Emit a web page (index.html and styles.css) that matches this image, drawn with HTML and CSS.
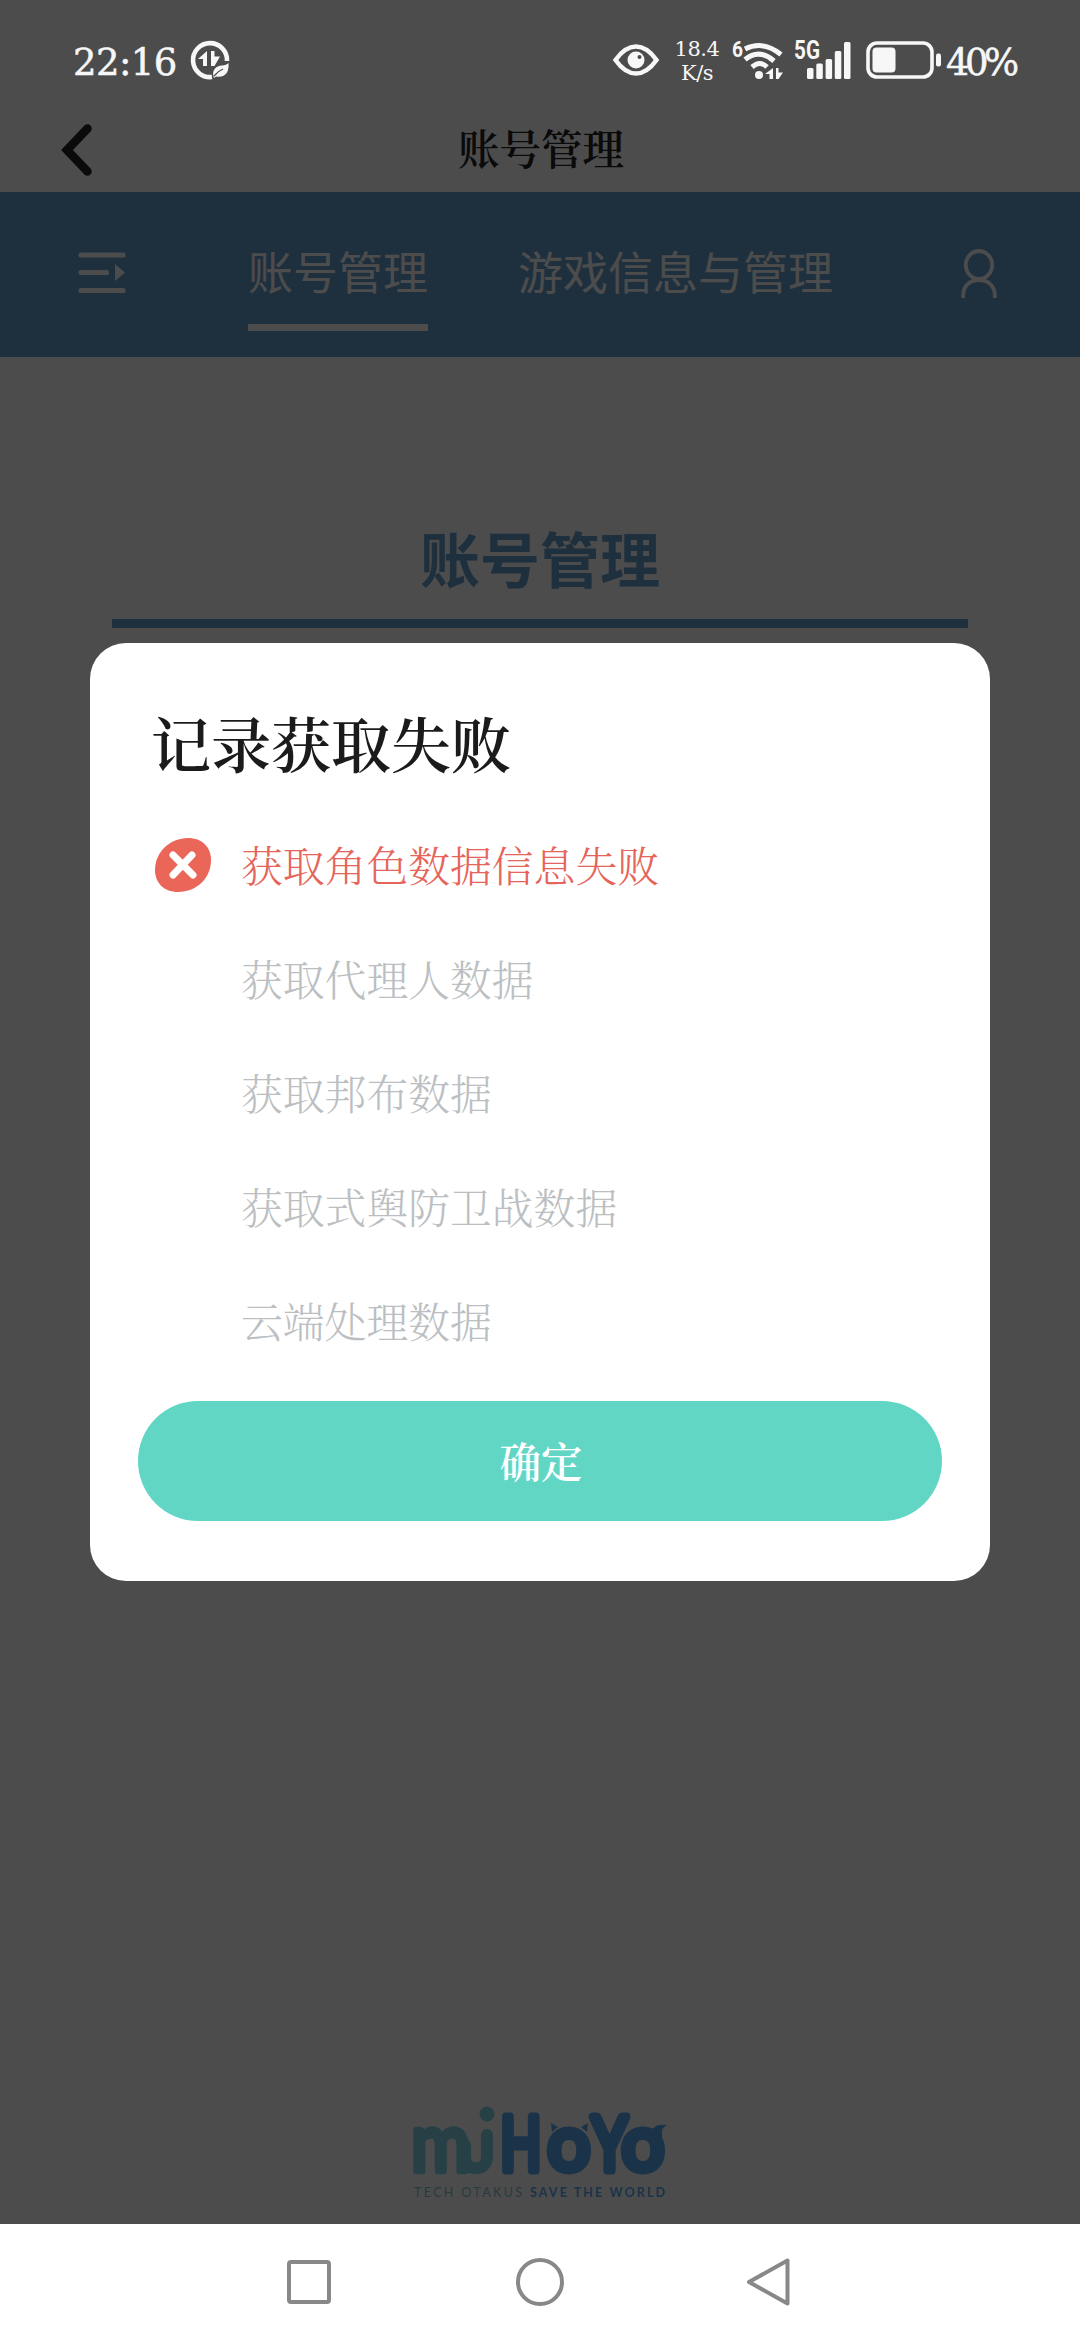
FILE: index.html
```html
<!DOCTYPE html>
<html lang="zh-CN">
<head>
<meta charset="utf-8">
<title>账号管理</title>
<link rel="stylesheet" href="styles.css">
</head>
<body>
<div class="screen">
  <header class="status">
    <span class="clock">22:16</span>
    <svg class="saver" width="40" height="40" viewBox="0 0 40 40">
      <path d="M37 21A17 17 0 1 0 22 37" fill="none" stroke="#f7f7f7" stroke-width="4.6"/>
      <path d="M17 11v15h-4v-7h-5zM21 11h3.500v5.500H30L24.500 26H21z" fill="#f7f7f7"/>
      <path d="M38.500 23c.8 9-3 15-12.500 13.500l-2 1.500c-3-8 2-12 8-12.500 3 0 5-1 6.500-2.500z" fill="#f7f7f7"/>
      <path d="M24 36q4-5 9-7" stroke="#4c4c4c" stroke-width="1.300" fill="none"/>
    </svg>
    <div class="indicators">
      <svg class="eye" width="46" height="32" viewBox="0 0 46 32">
        <path d="M2.500 16Q12 2.500 23 2.500T43.500 16Q34 29.500 23 29.500T2.500 16z" fill="none" stroke="#f7f7f7" stroke-width="4.500"/>
        <circle cx="23" cy="16" r="8.500" fill="#f7f7f7"/><circle cx="26.500" cy="13" r="2" fill="#4c4c4c"/>
      </svg>
      <div class="speed"><span>18.4</span><span>K/s</span></div>
      <svg class="wifi" width="52" height="42" viewBox="0 0 52 42">
        <text x="0" y="17.500" class="badge" font-size="22" textLength="11" lengthAdjust="spacingAndGlyphs">6</text>
        <g fill="none" stroke="#f7f7f7" stroke-width="5">
          <path d="M13 10Q31 1 49 15.500"/><path d="M13 20.500Q27 9 42 22"/><path d="M20 28Q28 21 35 28"/>
        </g>
        <circle cx="27" cy="36" r="4" fill="#f7f7f7"/>
        <path d="M41 29v11h-3.500v-5H33zM44 29h2.500v4.500H51L46.500 40H44z" fill="#f7f7f7"/>
      </svg>
      <svg class="signal" width="60" height="42" viewBox="0 0 60 42">
        <text x="0" y="20" class="badge" font-size="25" textLength="26" lengthAdjust="spacingAndGlyphs">5G</text>
        <g fill="#f7f7f7">
          <rect x="13" y="29" width="6.500" height="11" rx="1.500"/><rect x="22.300" y="24.500" width="6.500" height="15.500" rx="1.500"/><rect x="31.600" y="20" width="6.500" height="20" rx="1.500"/><rect x="40.800" y="12" width="6.500" height="28" rx="1.500"/><rect x="50" y="3" width="6.500" height="37" rx="1.500"/>
        </g>
      </svg>
      <svg class="battery" width="76" height="38" viewBox="0 0 76 38">
        <rect x="2" y="2" width="64" height="34" rx="9" fill="none" stroke="#f7f7f7" stroke-width="3.600"/>
        <rect x="6.500" y="6.500" width="23" height="25" rx="4" fill="#f7f7f7"/><rect x="70" y="12.500" width="5" height="13" rx="2" fill="#f7f7f7"/>
      </svg>
      <span class="percent">40%</span>
    </div>
  </header>

  <main class="page">
    <div class="titlebar">
      <svg class="back" width="34" height="56" viewBox="0 0 34 56"><path d="M27.500 6.500L7 28l20.500 21.500" fill="none" stroke="#222" stroke-width="8.500" stroke-linecap="round" stroke-linejoin="miter"/></svg>
      <span class="bar-title">账号管理</span>
    </div>
    <nav class="tabs">
      <svg class="menu" width="48" height="42" viewBox="0 0 48 42">
        <path d="M3 3h42M3 20.500h25.500M3 38.500h42" stroke="#fff" stroke-width="5.200" stroke-linecap="round"/><path d="M37 12l10 8.500L37 29z" fill="#fff"/>
      </svg>
      <span class="tab tab-active">账号管理</span>
      <span class="tab">游戏信息与管理</span>
      <svg class="user" width="36" height="50" viewBox="0 0 36 50"><g fill="none" stroke="#fff" stroke-width="3.800"><ellipse cx="18" cy="16" rx="13.200" ry="14"/><path d="M2.200 49v-3C2.200 26 33.800 26 33.800 46v3"/></g></svg>
    </nav>
    <h1 class="heading">账号管理</h1>
    <footer class="brand">
      <svg width="260" height="76" viewBox="20 12 260 76">
        <g class="logo-mi">
          <text transform="translate(21 80.500) scale(.88 1)" font-size="82">m</text>
          <path d="M75 55v12c0 15 22 15 22 0V45" fill="none" stroke-width="12"/>
          <circle cx="97" cy="24" r="7.500" stroke="none"/>
        </g>
        <g class="logo-hoyo">
          <text transform="translate(110.500 80) scale(.72 1)" font-size="74">H</text>
          <text transform="translate(157.500 80) scale(.98 1)" font-size="77">o</text>
          <text transform="translate(202 80) scale(.76 1)" font-size="74">Y</text>
          <text transform="translate(231.500 80) scale(.98 1)" font-size="77">o</text>
          <path d="M161 33l7 4-6 5zM198 33l-7 4 6 5zM253 41q8 1 13-5 4-2 11-1-6 3-5 9v13z" stroke="none"/>
        </g>
      </svg>
      <svg class="tagline" width="252" height="14" viewBox="0 0 252 14">
        <text x="0" y="12" fill="#84c5d2" font-size="12.500" textLength="108">TECH OTAKUS</text>
        <text x="116" y="12" fill="#5daaf3" font-size="12.500" font-weight="700" textLength="135">SAVE THE WORLD</text>
      </svg>
    </footer>
  </main>

  <div class="scrim">
    <section class="dialog">
      <h2 class="dialog-title">记录获取失败</h2>
      <ul class="steps">
        <li class="step step-failed">
          <svg class="fail" width="56" height="54" viewBox="0 0 56 54">
            <path d="M33 0C47 0 56 9 56 22 56 40 42 54 23 54 9 54 0 45 0 32 0 14 15 0 33 0z" fill="#ea6658"/>
            <path d="M18 17l20 20M37 17L18 37" stroke="#fff" stroke-width="7" stroke-linecap="round"/>
          </svg>
          <span>获取角色数据信息失败</span></li>
        <li class="step"><span>获取代理人数据</span></li>
        <li class="step"><span>获取邦布数据</span></li>
        <li class="step"><span>获取式舆防卫战数据</span></li>
        <li class="step"><span>云端处理数据</span></li>
      </ul>
      <button class="confirm">确定</button>
    </section>
  </div>

  <nav class="sysnav">
    <svg width="52" height="52" viewBox="0 0 52 52"><rect x="6" y="6" width="40" height="40" rx="2"/></svg>
    <svg width="52" height="52" viewBox="0 0 52 52"><circle cx="26" cy="26" r="22"/></svg>
    <svg width="52" height="52" viewBox="0 0 52 52"><path d="M42.500 4.500v43L4 26z"/></svg>
  </nav>
</div>
</body>
</html>
```
FILE: styles.css
```css
* { box-sizing: border-box; }
body { margin: 0; background: #fff; font-family: "Noto Serif CJK SC", "Noto Sans CJK SC", sans-serif; }
svg { display: block; flex: none; overflow: visible; }

.screen { position: relative; width: 1080px; height: 2340px; display: flex; flex-direction: column; overflow: hidden; }

.status { position: relative; z-index: 2; height: 104px; padding: 16px 60px 0 73px; display: flex; align-items: center; color: #f7f7f7; font-family: "DejaVu Serif", serif; }
.clock { width: 117px; padding-top: 6px; font-size: 37px; letter-spacing: -.6px; line-height: 40px; -webkit-text-stroke: .5px #f7f7f7; }
.indicators { margin-left: auto; display: flex; align-items: center; }
.speed { width: 52px; margin-left: 12px; padding-top: 2px; display: flex; flex-direction: column; align-items: center; font-size: 21px; line-height: 24px; letter-spacing: -.5px; }
.wifi { margin-left: 9px; }
.signal { margin-left: 10px; }
.battery { margin-left: 12px; }
.percent { width: 74px; margin-left: 4px; padding-top: 6px; font-size: 37px; letter-spacing: -4.5px; line-height: 40px; white-space: nowrap; -webkit-text-stroke: .5px #f7f7f7; }
.badge { fill: #f7f7f7; font-family: Roboto, sans-serif; font-weight: 700; }

.page { height: 2120px; display: flex; flex-direction: column; }
.titlebar { height: 88px; display: grid; grid-template-columns: 60px 1fr 60px; padding-top: 3px; align-items: center; }
.back { margin-left: 60px; }
.bar-title { padding: 0 0 6px 2px; text-align: center; font-size: 41.5px; font-weight: 600; line-height: 60px; color: #222; }

.tabs { height: 165px; padding: 0 83px 0 78px; display: flex; background: #659dd0; color: #fff; font-family: "Noto Sans CJK SC", sans-serif; font-size: 45px; }
.menu { margin: 60px 122px 0 0; }
.tab { height: 139px; padding-top: 48px; line-height: 62px; margin-right: 90px; border-bottom: 7px solid transparent; white-space: nowrap; }
.tab-active { border-bottom-color: #fff; }
.user { margin: 57px 0 0 auto; }
.heading { margin: 120px 112px 0; height: 151px; padding-top: 37px; border-bottom: 9px solid #659dd0; text-align: center; color: #659dd0; font-family: "Noto Sans CJK SC", sans-serif; font-size: 60px; font-weight: 700; line-height: 86px; }

.brand { margin-top: auto; padding-bottom: 25px; display: flex; flex-direction: column; align-items: center; font-family: Lato, sans-serif; }
.brand text { vector-effect: non-scaling-stroke; }
.logo-mi { fill: #82d8e8; stroke: #82d8e8; stroke-width: 6px; stroke-linejoin: round; stroke-linecap: round; }
.logo-hoyo { fill: #5daaf3; stroke: #5daaf3; stroke-width: 8px; stroke-linejoin: round; }
.tagline { margin-top: 7px; }

.scrim { position: absolute; inset: 0 0 116px; display: flex; align-items: center; justify-content: center; background: rgba(0, 0, 0, .7); }
.dialog { width: 900px; height: 938px; padding: 56px 48px 60px; display: flex; flex-direction: column; border-radius: 36px; background: #fff; }
.dialog-title { margin: 0 13px; font-size: 60px; font-weight: 600; line-height: 86px; color: #1b1b1b; }
.steps { list-style: none; margin: 23px 0 0; padding: 0; }
.step { height: 114px; padding-left: 17px; display: flex; align-items: center; justify-content: flex-start; color: #bcbfc2; font-size: 41.8px; font-weight: 300; }
.step span { margin: 0 0 2px 86px; line-height: 60px; }
.step-failed { color: #e5655a; }
.step-failed span { margin-left: 30px; }
.confirm { flex: none; height: 120px; margin-top: 23px; padding: 0 0 2px 2px; border: 0; border-radius: 60px; background: #62d6c5; color: #fff; font: 600 41.500px/60px "Noto Serif CJK SC", "Noto Sans CJK SC", sans-serif; }

.sysnav { height: 116px; display: flex; justify-content: center; align-items: center; gap: 179px; fill: none; stroke: #888; stroke-width: 4px; stroke-linejoin: round; background: #fff; }
```
